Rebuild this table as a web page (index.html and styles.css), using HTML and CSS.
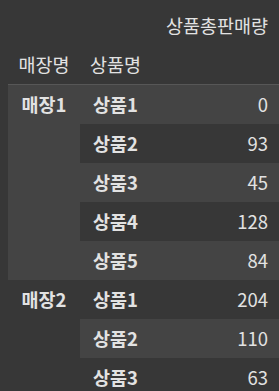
FILE: index.html
```html
<!DOCTYPE html>
<html lang="ko">
<head>
<meta charset="utf-8">
<link rel="stylesheet" href="styles.css">
</head>
<body>
<table class="df">
  <colgroup>
    <col class="c-store">
    <col class="c-prod">
    <col class="c-val">
  </colgroup>
  <thead>
    <tr>
      <th></th>
      <th></th>
      <th class="num">상품총판매량</th>
    </tr>
    <tr class="names">
      <th>매장명</th>
      <th>상품명</th>
      <th></th>
    </tr>
  </thead>
  <tbody>
    <tr><th class="grp" rowspan="5">매장1</th><th>상품1</th><td>0</td></tr>
    <tr><th>상품2</th><td>93</td></tr>
    <tr><th>상품3</th><td>45</td></tr>
    <tr><th>상품4</th><td>128</td></tr>
    <tr><th>상품5</th><td>84</td></tr>
    <tr><th class="grp" rowspan="3">매장2</th><th>상품1</th><td>204</td></tr>
    <tr><th>상품2</th><td>110</td></tr>
    <tr><th>상품3</th><td>63</td></tr>
  </tbody>
</table>
</body>
</html>
```
FILE: styles.css
```css
html, body {
  margin: 0;
  padding: 0;
  background: #373737;
  overflow: hidden;
}
body {
  padding: 6px 0 0 8px;
  font-family: "Noto Sans CJK KR", "Noto Sans", sans-serif;
  color: #e2e2e2;
  font-size: 18.5px;
}
.df {
  border-collapse: collapse;
  border-spacing: 0;
  table-layout: fixed;
  width: 271px;
}
.c-store { width: 72px; }
.c-prod { width: 71px; }
.df th, .df td {
  height: 39px;
  padding: 0;
  line-height: 39px;
  white-space: nowrap;
}
.df thead th {
  font-weight: normal;
  text-align: center;
}
.df thead th.num {
  text-align: right;
  padding-right: 11px;
}
.df thead tr.names th {
  border-bottom: 1px solid #575757;
}
.df tbody th {
  font-weight: bold;
  text-align: center;
  vertical-align: top;
}
.df tbody td {
  text-align: right;
  padding-right: 11px;
}
.df tbody tr:nth-child(odd) {
  background: #444444;
}
```
